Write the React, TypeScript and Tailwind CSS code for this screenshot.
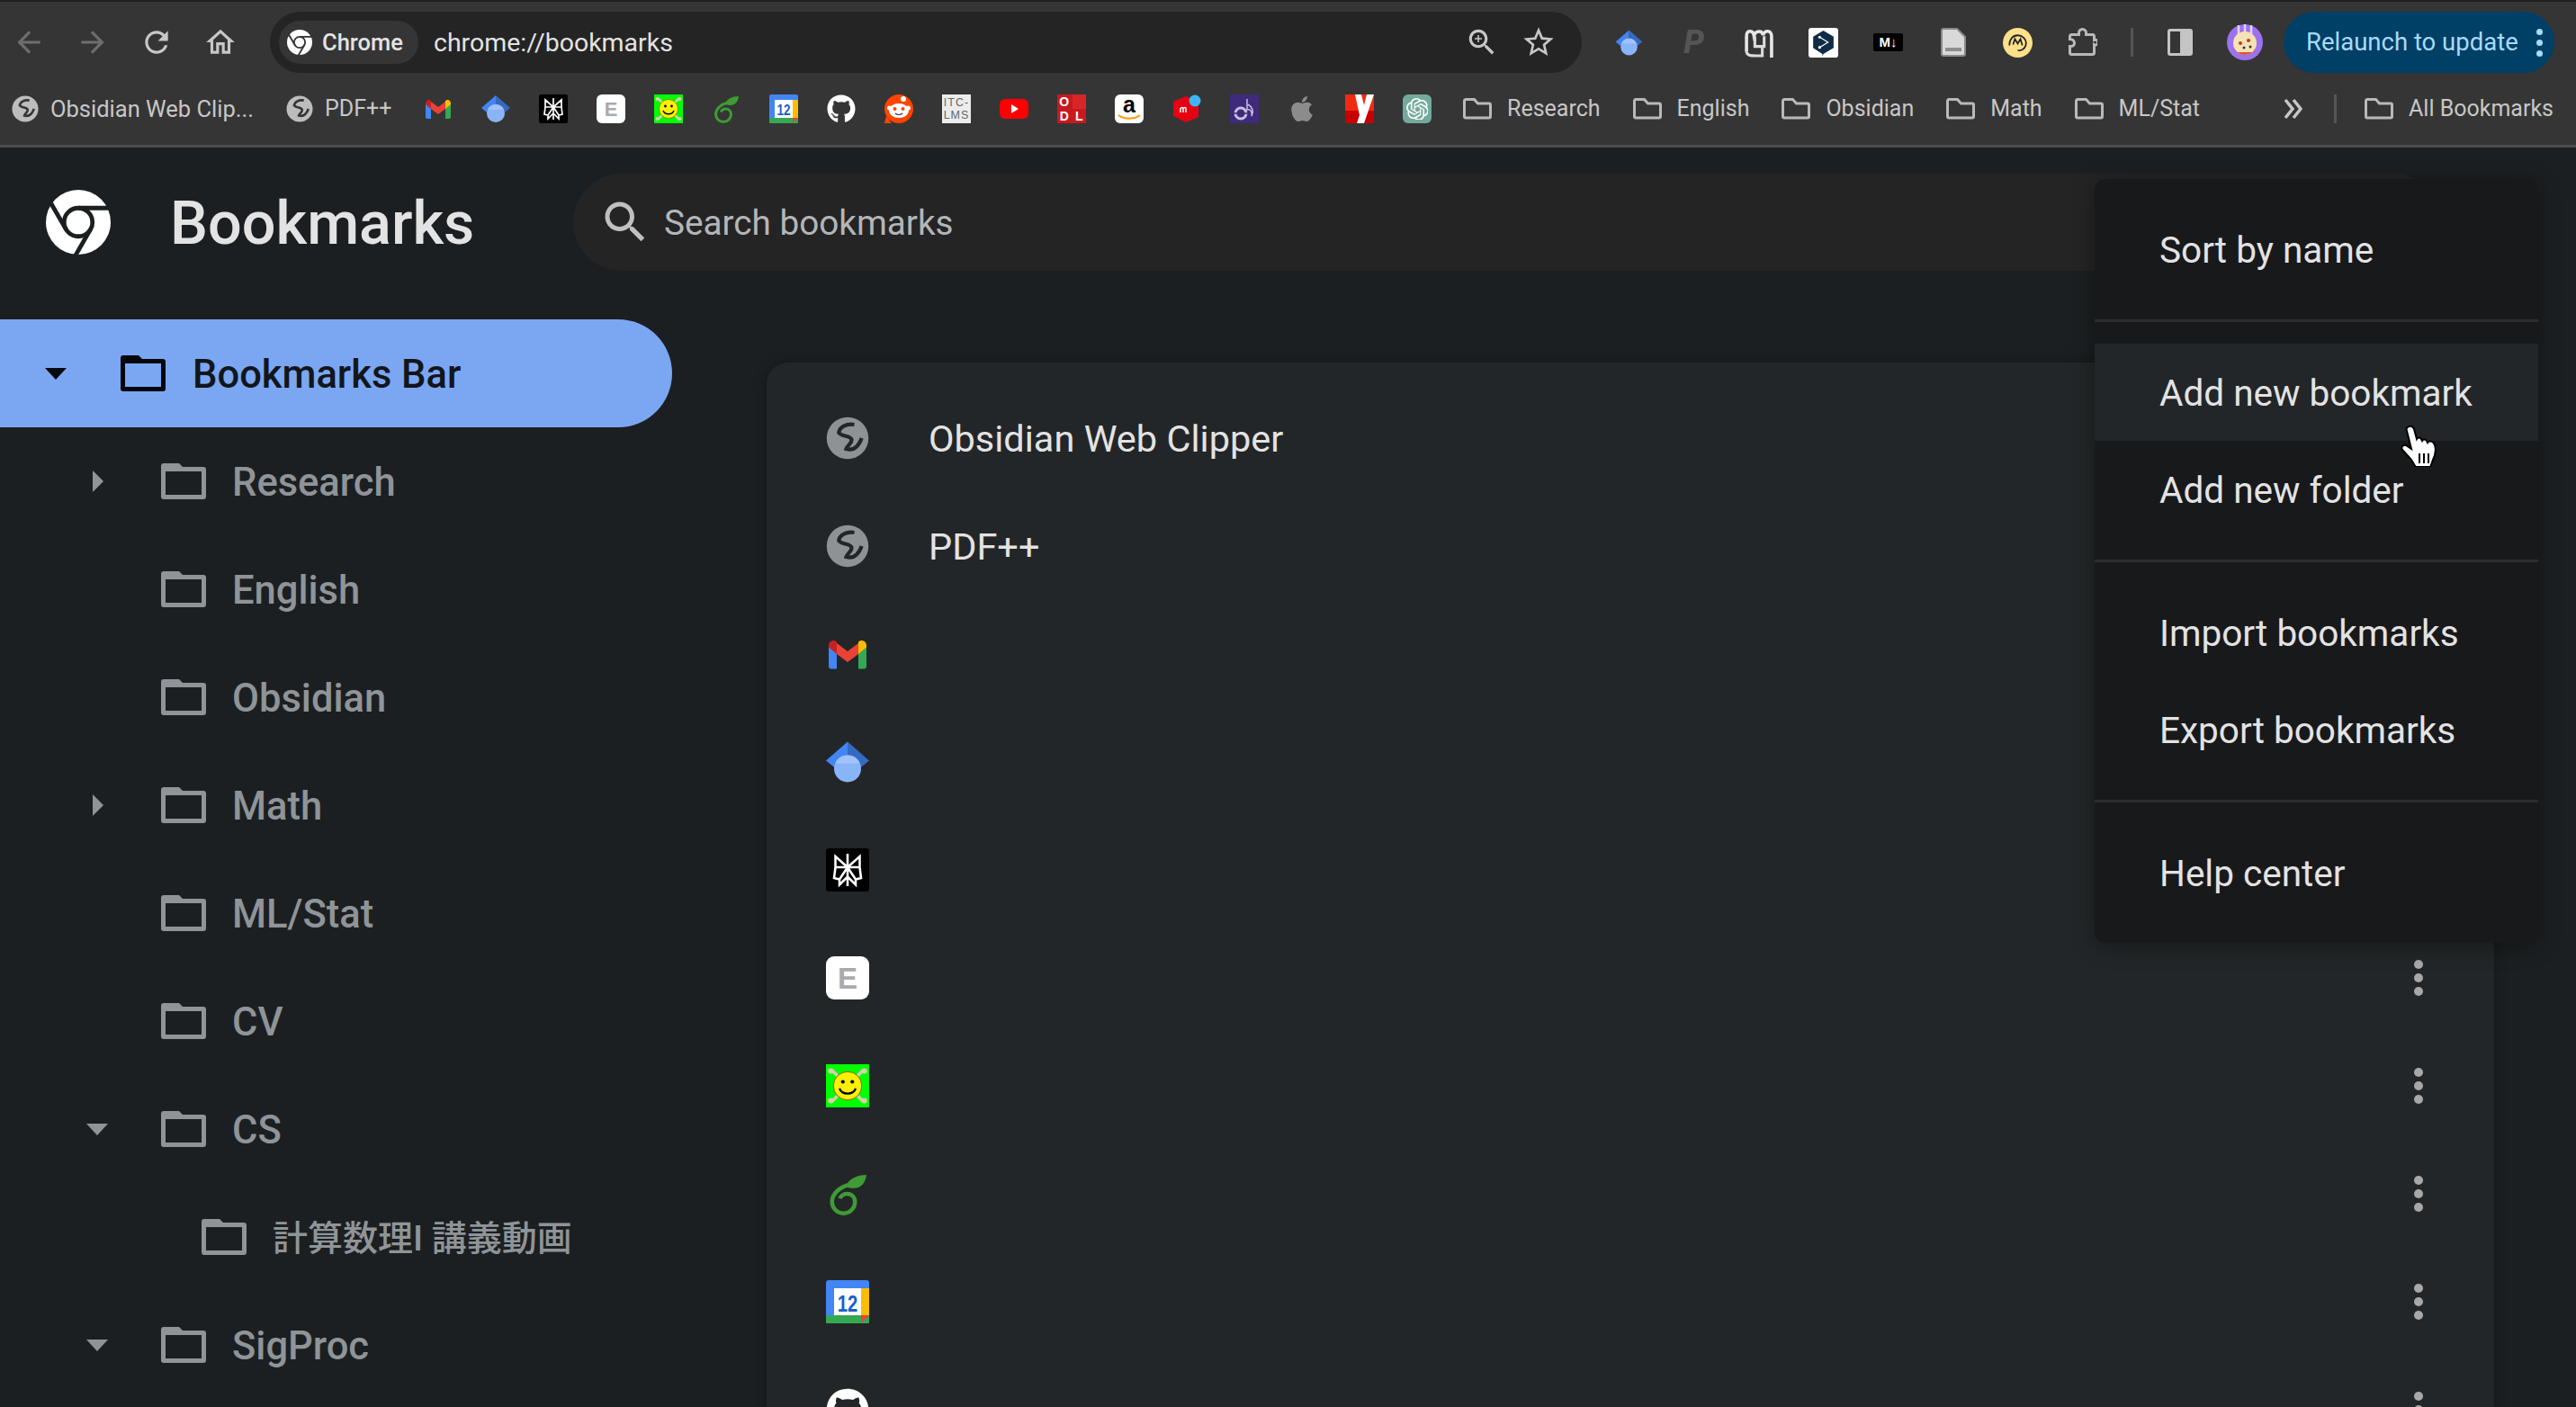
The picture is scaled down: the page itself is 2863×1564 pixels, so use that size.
import { ReactNode } from "react";
import { FaApple, FaGithub } from "react-icons/fa";
import { SiOpenai } from "react-icons/si";

const P = {
  back: "M20 11H7.83l5.59-5.59L12 4l-8 8 8 8 1.41-1.41L7.83 13H20v-2z",
  forward: "M12 4l-1.41 1.41L16.17 11H4v2h12.17l-5.58 5.59L12 20l8-8z",
  reload:
    "M17.65 6.35C16.2 4.9 14.21 4 12 4c-4.42 0-7.99 3.58-7.99 8s3.57 8 7.99 8c3.73 0 6.84-2.55 7.73-6h-2.08c-.82 2.33-3.04 4-5.65 4-3.31 0-6-2.69-6-6s2.69-6 6-6c1.66 0 3.14.69 4.22 1.78L13 11h7V4l-2.35 2.35z",
  home: "M12 5.69l5 4.5V18h-2v-6H9v6H7v-7.81l5-4.5M12 3L2 12h3v8h6v-6h2v6h6v-8h3L12 3z",
  search:
    "M15.5 14h-.79l-.28-.27C15.41 12.59 16 11.11 16 9.5 16 5.91 13.09 3 9.5 3S3 5.91 3 9.5 5.91 16 9.5 16c1.61 0 3.09-.59 4.23-1.57l.27.28v.79l5 4.99L20.49 19l-4.99-5zm-6 0C7.01 14 5 11.99 5 9.5S7.01 5 9.5 5 14 7.01 14 9.5 11.99 14 9.5 14z",
  zoom: "M15.5 14h-.79l-.28-.27C15.41 12.59 16 11.11 16 9.5 16 5.91 13.09 3 9.5 3S3 5.91 3 9.5 5.91 16 9.5 16c1.61 0 3.09-.59 4.23-1.57l.27.28v.79l5 4.99L20.49 19l-4.99-5zm-6 0C7.01 14 5 11.99 5 9.5S7.01 5 9.5 5 14 7.01 14 9.5 11.99 14 9.5 14zM12 10h-2v2H9v-2H7V9h2V7h1v2h2v1z",
  star: "M22 9.24l-7.19-.62L12 2 9.19 8.63 2 9.24l5.46 4.73L5.82 21 12 17.27 18.18 21l-1.63-7.03L22 9.24zM12 15.4l-3.76 2.27 1-4.28-3.32-2.88 4.38-.38L12 6.1l1.71 4.04 4.38.38-3.32 2.88 1 4.28L12 15.4z",
};

function Mat({ d, className }: { d: string; className: string }) {
  return (
    <svg viewBox="0 0 24 24" className={className} fill="currentColor">
      <path d={d} />
    </svg>
  );
}

function ChromeLogo({ className }: { className: string }) {
  return (
    <svg viewBox="0 0 48 48" className={className}>
      <circle cx="24" cy="24" r="24" fill="#fff" />
      <g stroke="currentColor" strokeWidth="3.2" fill="none">
        <circle cx="24" cy="24" r="10.5" />
        <path d="M24 13.5H47" />
        <path d="M24 13.5H47" transform="rotate(120 24 24)" />
        <path d="M24 13.5H47" transform="rotate(240 24 24)" />
      </g>
    </svg>
  );
}

function Globe({ disc, land }: { disc: string; land: string }) {
  return (
    <svg viewBox="0 0 32 32" className="w-full h-full">
      <circle cx="16" cy="16" r="15.5" fill={disc} />
      <path
        d="M21 6C15 5 10 8 9.500 12c3 3.500 8 1.500 9.500 5 .3 3-3 4-4 7 5 1.500 9-1.500 11.500-8"
        stroke={land}
        strokeWidth="2.800"
        fill="none"
      />
    </svg>
  );
}

function FolderSolid({ className }: { className: string }) {
  return (
    <svg viewBox="0 0 50 40" className={className} fill="currentColor">
      <path
        fillRule="evenodd"
        d="M3 0h17l4 4h23a3 3 0 0 1 3 3v30a3 3 0 0 1-3 3H3a3 3 0 0 1-3-3V3a3 3 0 0 1 3-3zM5 9v26h40V9z"
      />
    </svg>
  );
}

function FolderLine() {
  return (
    <svg viewBox="0 0 32 24" className="w-[32px] h-[24px] shrink-0" fill="none">
      <path
        d="M3 1.5h9.5l4 4.5H29a1.5 1.5 0 0 1 1.5 1.5v13a1.5 1.5 0 0 1-1.5 1.5H3a1.5 1.5 0 0 1-1.5-1.5V3A1.5 1.5 0 0 1 3 1.5z"
        stroke="#b9b9b9"
        strokeWidth="3"
      />
    </svg>
  );
}

function Fav({ children }: { children: ReactNode }) {
  return (
    <svg viewBox="0 0 32 32" className="w-full h-full">
      {children}
    </svg>
  );
}

const Gmail = (
  <Fav>
    <path fill="#4285f4" d="M2 10v15a2 2 0 0 0 2 2h4V14z" />
    <path fill="#34a853" d="M30 10v15a2 2 0 0 1-2 2h-4V14z" />
    <path fill="#ea4335" d="M8 8l8 6 8-6v8l-8 6-8-6z" />
    <path fill="#c5221f" d="M2 10c0-4 4-5 6-3v9l-6-5z" />
    <path fill="#fbbc04" d="M30 10c0-4-4-5-6-3v9l6-5z" />
  </Fav>
);

const Scholar = (
  <Fav>
    <path fill="#4285f4" d="M16 1L0 15l16 13z" />
    <path fill="#356ac3" d="M16 1l16 14-16 13z" />
    <circle cx="16" cy="21" r="10" fill="#8ab4f8" />
    <path fill="#a1c2fa" d="M6.8 17a10 10 0 0 1 18.4 0z" />
  </Fav>
);

const Perplexity = (
  <Fav>
    <rect width="32" height="32" rx="2" fill="#000" />
    <path
      d="M16 4v24M7 6l9 8 9-8v8H7V6zM7 14l-1 8 4 1 6-9 6 9 4-1-1-8M10 23v4l6-6 6 6v-4"
      stroke="#fff"
      strokeWidth="1.7"
      fill="none"
    />
  </Fav>
);

const Evernoteish = (
  <Fav>
    <rect width="32" height="32" rx="6" fill="#fff" />
    <text x="16" y="24" textAnchor="middle" fontSize="22" fontWeight="700" fill="#aaa" fontFamily="Liberation Sans, sans-serif">
      E
    </text>
  </Fav>
);

const Smiley = (
  <Fav>
    <rect width="32" height="32" fill="#0f0" />
    <path d="M4 4l24 24M28 4L4 28" stroke="#d8cdb0" strokeWidth="2.500" />
    <circle cx="3.500" cy="5" r="2" fill="#d8cdb0" />
    <circle cx="28.500" cy="5" r="2" fill="#d8cdb0" />
    <circle cx="3.500" cy="27" r="2" fill="#d8cdb0" />
    <circle cx="28.500" cy="27" r="2" fill="#d8cdb0" />
    <circle cx="16" cy="16" r="10.500" fill="#fff000" stroke="#6b6000" strokeWidth=".6" />
    <circle cx="12.500" cy="13" r="1.400" fill="#000" />
    <circle cx="19.500" cy="13" r="1.400" fill="#000" />
    <path d="M10 18c2 5 10 5 12 0" stroke="#000" strokeWidth="1.500" fill="none" />
  </Fav>
);

const Overleaf = (
  <Fav>
    <path
      d="M18 9C10 11 4.500 16 4.500 22a8.500 8.500 0 0 0 17 0c0-3.500-2.500-6-6-6-2.500 0-4.500 1.500-5 3.500"
      stroke="#3f9b35"
      strokeWidth="3"
      fill="none"
    />
    <path fill="#3f9b35" d="M15 11c1-6 8-9 15-9-1 7-5 12-15 9z" />
  </Fav>
);

const Calendar = (
  <Fav>
    <rect width="32" height="32" rx="2" fill="#4285f4" />
    <rect x="26" y="6" width="6" height="20" fill="#fbbc04" />
    <rect y="26" width="32" height="6" rx="1" fill="#34a853" />
    <path d="M26 32v-6h6z" fill="#ea4335" />
    <rect x="6" y="6" width="20" height="20" fill="#fff" />
    <text x="16" y="23" textAnchor="middle" fontSize="17" fontWeight="700" fill="#1a5fc8" fontFamily="Liberation Sans, sans-serif" textLength="15" lengthAdjust="spacingAndGlyphs">
      12
    </text>
  </Fav>
);

const Reddit = (
  <Fav>
    <circle cx="16" cy="16" r="16" fill="#ff4500" />
    <path d="M0 32h8L2 24z" fill="#ff4500" />
    <circle cx="21" cy="5" r="3" fill="#fff" />
    <ellipse cx="16" cy="18" rx="11" ry="8" fill="#fff" />
    <circle cx="5.500" cy="15" r="2.500" fill="#fff" />
    <circle cx="26.500" cy="15" r="2.500" fill="#fff" />
    <circle cx="11.500" cy="16" r="2" fill="#ff4500" />
    <circle cx="20.500" cy="16" r="2" fill="#ff4500" />
    <path d="M12 21c2 2 6 2 8 0" stroke="#333" strokeWidth="1.2" fill="none" />
  </Fav>
);

const Itc = (
  <div className="w-full h-full bg-[#ececec] flex flex-col items-center justify-center text-[#666] text-[12.5px] leading-[14px] font-[Liberation_Sans,sans-serif] tracking-[1px]">
    <span>ITC-</span>
    <span>LMS</span>
  </div>
);

const YouTube = (
  <Fav>
    <rect y="5" width="32" height="22" rx="6" fill="#f00" />
    <path d="M13 11l8 5-8 5z" fill="#fff" />
  </Fav>
);

const Odl = (
  <div className="w-full h-full bg-[#c8191f] grid grid-cols-2 grid-rows-2 gap-px text-white text-[14px] font-bold leading-none font-[Liberation_Sans,sans-serif]">
    <span className="bg-[#c8191f] flex items-center justify-center">O</span>
    <span className="bg-[#d92526]" />
    <span className="bg-[#c8191f] flex items-center justify-center">D</span>
    <span className="bg-[#c8191f] flex items-center justify-center">L</span>
  </div>
);

const Amazon = (
  <Fav>
    <rect width="32" height="32" rx="6" fill="#fff" />
    <text x="16" y="20" textAnchor="middle" fontSize="25" fontWeight="700" fill="#000" fontFamily="Liberation Sans, sans-serif">
      a
    </text>
    <path d="M4 23c7 5 17 5 24 0" stroke="#f90" strokeWidth="2" fill="none" />
  </Fav>
);

const Mercari = (
  <Fav>
    <path fill="#e60012" d="M15 2l14 6v17l-14 6-14-7V8z" />
    <circle cx="25" cy="7" r="6.500" fill="#3fb5f5" />
    <path d="M9 20v-5m0 1c1-2 3-2 3 0v4m0-4c1-2 3-2 3 0v4" stroke="#fff" strokeWidth="1.500" fill="none" />
  </Fav>
);

const Purple = (
  <Fav>
    <rect width="32" height="32" fill="#3f2a7c" />
    <circle cx="12" cy="21" r="6" stroke="#c9bfe0" strokeWidth="3" fill="none" />
    <path d="M4 21h16" stroke="#3f2a7c" strokeWidth="1.500" />
    <circle cx="12" cy="21" r="1.800" fill="#3f2a7c" />
    <path d="M19 5v12c4-1 6 2 5 7 3-5 1-10-4-13" stroke="#c9bfe0" strokeWidth="1.500" fill="none" />
  </Fav>
);

const YSite = (
  <Fav>
    <rect width="32" height="32" fill="#f02a10" />
    <rect y="18" width="32" height="14" fill="#c70000" />
    <path d="M11 0h7l3 12 3-12h8L21 32h-8l3-9z" fill="#fff" />
  </Fav>
);

const ChatGpt = (
  <div className="w-full h-full rounded-[6px] bg-[#74aa9c] flex items-center justify-center">
    <SiOpenai className="w-[78%] h-[78%] text-white" />
  </div>
);

const DeepL = (
  <Fav>
    <rect width="32" height="32" rx="3" fill="#fff" />
    <path fill="#0f2b46" d="M16 3l11 6.500v12L16 28l-1 3v-3L5 21.500v-12z" />
    <path d="M12 10l9 5.500-9 5.500" stroke="#fff" strokeWidth="1.200" fill="none" />
    <circle cx="12" cy="10" r="1.500" fill="#fff" />
    <circle cx="12" cy="21" r="1.500" fill="#fff" />
  </Fav>
);

const Mem = (
  <Fav>
    <path d="M3 26V9c0-7 7-7 8-1 2-5 9-6 10 0 1-6 9-6 9 1v23" stroke="#e6e6e6" strokeWidth="3.500" fill="none" />
    <path d="M12 9v11h10V9M3 26c1 4 5 4 10 4h7v-9" stroke="#dcdcdc" strokeWidth="3" fill="none" />
  </Fav>
);

const Markdown = (
  <div className="w-full h-[20px] rounded-[2px] bg-black text-white text-[15px] font-bold leading-[20px] text-center font-[Liberation_Sans,sans-serif]">
    M↓
  </div>
);

const Doc = (
  <svg viewBox="0 0 28 32" className="w-[28px] h-[32px]">
    <path d="M1 3a2 2 0 0 1 2-2h15l9 9v19a2 2 0 0 1-2 2H3a2 2 0 0 1-2-2z" fill="#d9d9d9" stroke="#8a8a8a" strokeWidth="2" />
    <path d="M5 22h18v4H5z" fill="#8f8f8f" />
  </svg>
);

const YellowM = (
  <Fav>
    <circle cx="16" cy="16" r="16" fill="#fce08a" />
    <path d="M7 19c0-7 4-11 9-11s9 4 9 8c0 7-6 9-9 8M11 18l2-6 3 5 3-5 2 7" stroke="#222" strokeWidth="1.700" fill="none" />
  </Fav>
);

const Puzzle = (
  <svg viewBox="0 0 33 32" className="w-[33px] h-[32px]" fill="none">
    <path
      d="M4 8h8V6a4 4 0 0 1 8 0v2h7a2 2 0 0 1 2 2v4c3-1 4 1 4 3s-2 3-4 2v9a2 2 0 0 1-2 2H4a2 2 0 0 1-2-2v-7c4 0 5-2 5-3.500S6 13 2 13v-3a2 2 0 0 1 2-2z"
      stroke="#b9b9b9"
      strokeWidth="3"
      transform="translate(.5 -.5)"
    />
  </svg>
);

const PanelIcon = (
  <div className="w-[28px] h-[30px] rounded-[3px] border-[3px] border-[#c4c4c4] flex justify-end">
    <div className="w-[11px] bg-[#c4c4c4]" />
  </div>
);

const Avatar = (
  <svg viewBox="0 0 40 40" className="w-[40px] h-[40px]">
    <circle cx="20" cy="20" r="20" fill="#9c72ee" />
    <path d="M13 1v18M20 0v16M27 1v18" stroke="#e4d5f7" strokeWidth="2.500" />
    <circle cx="20" cy="21" r="13" fill="#f7e2b5" />
    <path d="M8 26a13 13 0 0 0 24 0l-2 5H10z" fill="#e2552b" />
    <circle cx="15" cy="21" r="2" fill="#c5381e" />
    <circle cx="24" cy="18" r="2" fill="#c5381e" />
    <circle cx="19" cy="26" r="1.500" fill="#333" />
    <circle cx="26" cy="25" r="1.500" fill="#333" />
  </svg>
);

const favicons: ReactNode[] = [
  Gmail,
  Scholar,
  Perplexity,
  Evernoteish,
  Smiley,
  Overleaf,
  Calendar,
  <FaGithub className="w-full h-full text-white" />,
  Reddit,
  Itc,
  YouTube,
  Odl,
  Amazon,
  Mercari,
  Purple,
  <FaApple className="w-full h-full text-[#8c8c8c]" />,
  YSite,
  ChatGpt,
];

const barFolders = ["Research", "English", "Obsidian", "Math", "ML/Stat"];

const treeItems = [
  { name: "Research", depth: 1, arrow: "right" },
  { name: "English", depth: 1 },
  { name: "Obsidian", depth: 1 },
  { name: "Math", depth: 1, arrow: "right" },
  { name: "ML/Stat", depth: 1 },
  { name: "CV", depth: 1 },
  { name: "CS", depth: 1, arrow: "down" },
  { name: "計算数理I 講義動画", depth: 2 },
  { name: "SigProc", depth: 1, arrow: "down" },
];

const rows: { fav: ReactNode; title?: string; dots?: boolean }[] = [
  { fav: <Globe disc="#8f9295" land="#232628" />, title: "Obsidian Web Clipper" },
  { fav: <Globe disc="#8f9295" land="#232628" />, title: "PDF++" },
  { fav: Gmail },
  { fav: Scholar },
  { fav: Perplexity },
  { fav: Evernoteish, dots: true },
  { fav: Smiley, dots: true },
  { fav: Overleaf, dots: true },
  { fav: Calendar, dots: true },
  { fav: <FaGithub className="w-full h-full text-white" />, dots: true },
];

function Dots({ className }: { className: string }) {
  return (
    <div className={`flex flex-col ${className}`}>
      <span className="w-full aspect-square rounded-full bg-current" />
      <span className="w-full aspect-square rounded-full bg-current" />
      <span className="w-full aspect-square rounded-full bg-current" />
    </div>
  );
}

function MenuItem({ label, hover }: { label: string; hover?: boolean }) {
  return (
    <div className={`h-[108px] pl-[72px] pt-[3px] flex items-center ${hover ? "bg-[#232628]" : ""}`}>
      {label}
    </div>
  );
}

export default function App() {
  return (
    <div className="relative w-[2863px] h-[1564px] overflow-hidden bg-[#1c1f21] font-['Roboto','Noto_Sans_CJK_JP',sans-serif]">
      {/* browser toolbar */}
      <div className="h-[92px] border-t-2 border-[#1f1f1f] bg-[#353535] flex items-center pl-[13px] text-[#c7c7c7]">
        <div className="flex items-center gap-[33px]">
          <Mat d={P.back} className="w-[38px] h-[38px] text-[#6e6e6e]" />
          <Mat d={P.forward} className="w-[38px] h-[38px] text-[#6e6e6e]" />
          <Mat d={P.reload} className="w-[38px] h-[38px]" />
          <Mat d={P.home} className="w-[38px] h-[38px]" />
        </div>
        <div className="ml-[36px] w-[1458px] h-[68px] rounded-full bg-[#242424] flex items-center pl-[10px] pr-[28px]">
          <div className="h-[48px] w-[155px] rounded-full bg-[#353535] flex items-center pl-[9px] gap-[11px] text-[25.5px] font-medium text-[#e3e3e3]">
            <ChromeLogo className="w-[28px] h-[28px] text-[#353535] shrink-0" />
            Chrome
          </div>
          <span className="ml-[17px] pt-[2px] text-[28.5px] text-[#e3e3e3]">chrome://bookmarks</span>
          <Mat d={P.zoom} className="ml-auto w-[38px] h-[38px]" />
          <Mat d={P.star} className="ml-[24px] w-[40px] h-[40px]" />
        </div>
        <div className="ml-[36px] flex items-center gap-[39px]">
          <div className="w-[33px] h-[33px] scale-90">{Scholar}</div>
          <div className="w-[33px] h-[33px] text-[36px] leading-[33px] font-extrabold italic text-center text-[#555]">P</div>
          <div className="w-[33px] h-[33px]">{Mem}</div>
          <div className="w-[33px] h-[33px]">{DeepL}</div>
          <div className="w-[33px] flex justify-center">{Markdown}</div>
          <div className="w-[33px] flex justify-center">{Doc}</div>
          <div className="w-[33px] h-[33px]">{YellowM}</div>
          <div className="w-[33px] h-[32px]">{Puzzle}</div>
        </div>
        <div className="ml-[37px] w-[3px] h-[32px] bg-[#555]" />
        <div className="ml-[38px]">{PanelIcon}</div>
        <div className="ml-[38px]">{Avatar}</div>
        <div className="ml-[23px] w-[301px] h-[68px] rounded-full bg-[#003f66] flex items-center pl-[25px] text-[27.5px] text-[#a8dafa]">
          Relaunch to update
          <Dots className="ml-[20px] w-[7px] gap-[5px]" />
        </div>
      </div>

      {/* bookmarks bar */}
      <div className="box-border h-[72px] border-b-[3px] border-[#4b4b4b] bg-[#353535] flex items-center pb-[11px] pl-[13px] pr-[25px] text-[25px] text-[#c7c7c7]">
        <div className="w-[30px] h-[30px] shrink-0"><Globe disc="#bdbdbd" land="#353535" /></div>
        <span className="ml-[13px] w-[227px] text-[25.5px] whitespace-nowrap">Obsidian Web Clip...</span>
        <div className="ml-[35px] w-[30px] h-[30px] shrink-0"><Globe disc="#bdbdbd" land="#353535" /></div>
        <span className="ml-[13px] w-[77px] whitespace-nowrap">PDF++</span>
        <div className="ml-[33px] flex items-center gap-[32px]">
          {favicons.map((f, i) => (
            <div key={i} className="w-[32px] h-[32px]">{f}</div>
          ))}
        </div>
        <div className="ml-[35px] flex items-center gap-[36px]">
          {barFolders.map((f) => (
            <div key={f} className="flex items-center gap-[17px]">
              <FolderLine />
              {f}
            </div>
          ))}
        </div>
        <div className="ml-auto flex items-center">
          <svg viewBox="0 0 21 24" className="w-[21px] h-[24px]" fill="none" stroke="#c7c7c7" strokeWidth="3.500">
            <path d="M2 2l8 10-8 10M11 2l8 10-8 10" />
          </svg>
          <div className="ml-[35px] w-[3px] h-[32px] bg-[#555]" />
          <div className="ml-[31px] flex items-center gap-[17px]">
            <FolderLine />
            All Bookmarks
          </div>
        </div>
      </div>

      {/* page header */}
      <div className="h-[191px] flex pt-[29px]">
        <div className="w-[637px] h-[108px] flex items-center pl-[51px] shrink-0">
          <ChromeLogo className="w-[72px] h-[72px] text-[#1c1f21]" />
          <span className="ml-[66px] pt-[3px] text-[66.5px] font-medium text-[#e3e3e3]">Bookmarks</span>
        </div>
        <div className="w-[2077px] h-[108px] rounded-full bg-[#242424] flex items-center pl-[28px] text-[38.7px] text-[#b4b6b8]">
          <Mat d={P.search} className="w-[60px] h-[60px] text-[#c0c0c0]" />
          <span className="ml-[13px] pt-[3px]">Search bookmarks</span>
        </div>
      </div>

      <div className="flex">
        {/* folder tree */}
        <div className="w-[852px] shrink-0 text-[43.5px] font-medium text-[#8f9498]">
          <div className="w-[747px] h-[120px] rounded-r-full bg-[#7ba7f2] flex items-center text-[#12161c]">
            <span className="ml-[50px] w-0 h-0 border-x-[12px] border-t-[13px] border-x-transparent border-t-[#06090f]" />
            <FolderSolid className="ml-[60px] w-[50px] h-[40px] text-[#05070c]" />
            <span className="ml-[30px] pt-[4px]">Bookmarks Bar</span>
          </div>
          {treeItems.map((t) => (
            <div key={t.name} className={`h-[120px] flex items-center relative ${t.depth === 2 ? "pl-[224px]" : "pl-[179px]"}`}>
              {t.arrow === "right" && (
                <span className="absolute left-[103px] w-0 h-0 border-y-[12px] border-l-[12px] border-y-transparent border-l-[#8f9498]" />
              )}
              {t.arrow === "down" && (
                <span className="absolute left-[96px] w-0 h-0 border-x-[12px] border-t-[13px] border-x-transparent border-t-[#8f9498]" />
              )}
              <FolderSolid className="w-[50px] h-[40px] shrink-0" />
              <span className={`ml-[29px] pt-[4px] ${t.depth === 2 ? "text-[39px]" : ""}`}>{t.name}</span>
            </div>
          ))}
        </div>

        {/* bookmark list */}
        <div className="pt-[48px]">
          <div className="w-[1920px] rounded-[24px] bg-[#232628] pt-[24px] shadow-[0_0_14px_rgba(0,0,0,0.3)]">
            {rows.map((r, i) => (
              <div key={i} className="h-[120px] flex items-center pl-[66px] text-[41.5px] text-[#e3e3e3]">
                <div className="w-[48px] h-[48px]">{r.fav}</div>
                {r.title && <span className="ml-[66px] pt-[3px]">{r.title}</span>}
                {r.dots && <Dots className="ml-auto mr-[79px] w-[10px] gap-[5px] text-[#a8a8a8]" />}
              </div>
            ))}
          </div>
        </div>
      </div>

      {/* sort and organize menu */}
      <div className="absolute left-[2328px] top-[199px] w-[493px] rounded-[12px] bg-[#18191b] py-[24px] text-[40.5px] text-[#e3e3e3] shadow-[0_4px_24px_rgba(0,0,0,0.35)]">
        <MenuItem label="Sort by name" />
        <div className="h-[3px] my-[24px] bg-[#2b2e30]" />
        <MenuItem label="Add new bookmark" hover />
        <MenuItem label="Add new folder" />
        <div className="h-[3px] my-[24px] bg-[#2b2e30]" />
        <MenuItem label="Import bookmarks" />
        <MenuItem label="Export bookmarks" />
        <div className="h-[3px] my-[24px] bg-[#2b2e30]" />
        <MenuItem label="Help center" />
      </div>

      {/* mouse pointer */}
      <svg viewBox="0 0 41 46" className="absolute left-[2668px] top-[473px] w-[41px] h-[46px]">
        <path
          d="M9 1c3-1 5 0 6 3l3 11c1-2 4-2 5 0l1 2c1-2 4-2 5 0l1 2c1-2 6-2 7 1 3 4 2 12-1 18-1 3-2 6-3 8H17c-2-2-3-5-5-8L2 27c-2-3 1-6 4-5l6 4L7 6c-1-2 0-4 2-5z"
          fill="#fff"
          stroke="#000"
          strokeWidth="2"
        />
        <path d="M21 31v11M26 31v11M31 31v11" stroke="#000" strokeWidth="2" />
      </svg>
    </div>
  );
}
